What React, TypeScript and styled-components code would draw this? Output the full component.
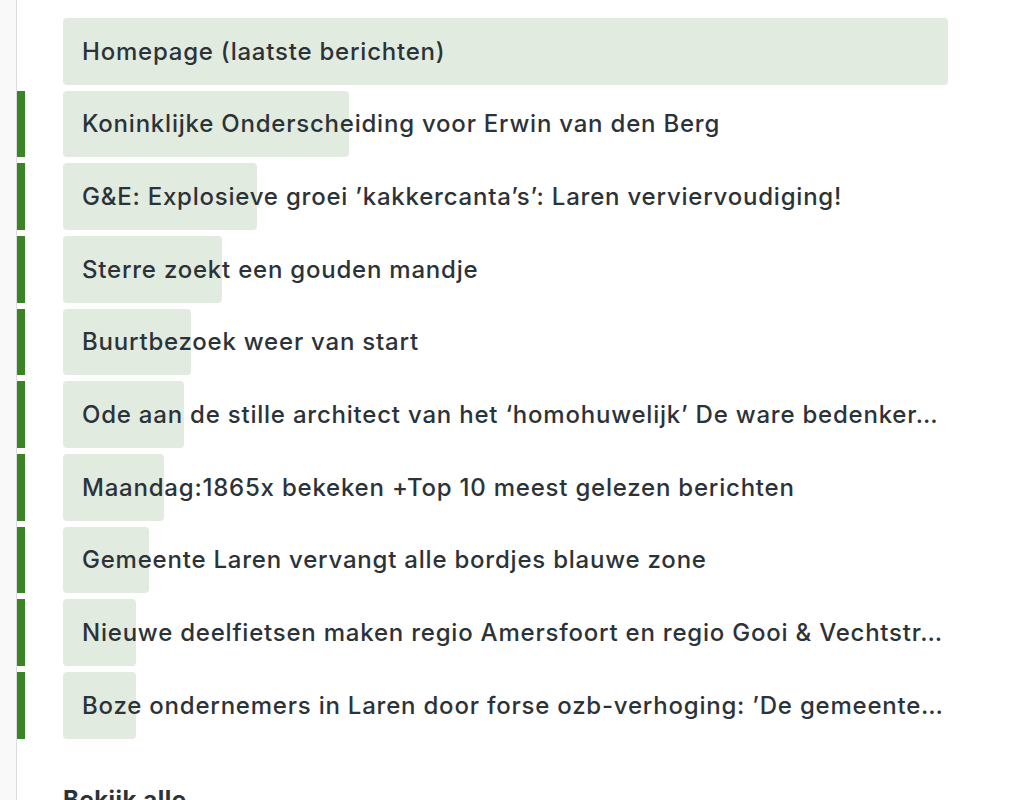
import React from "react";
import styled, { createGlobalStyle } from "styled-components";

const GlobalStyle = createGlobalStyle`
  html, body {
    margin: 0;
    padding: 0;
    background: #ffffff;
  }
  body {
    font-family: Inter, "Noto Sans", "Liberation Sans", sans-serif;
    color: #2c3338;
  }
`;

type Post = {
  title: string;
  views: number;
  page?: boolean;
};

// titles are cut where the list cuts them
const posts: Post[] = [
  { title: "Homepage (laatste berichten)", views: 885, page: true },
  { title: "Koninklijke Onderscheiding voor Erwin van den Berg", views: 286 },
  { title: "G&E: Explosieve groei ’kakkercanta’s’: Laren verviervoudiging!", views: 194 },
  { title: "Sterre zoekt een gouden mandje", views: 159 },
  { title: "Buurtbezoek weer van start", views: 128 },
  { title: "Ode aan de stille architect van het ‘homohuwelijk’ De ware bedenker…", views: 121 },
  { title: "Maandag:1865x bekeken +Top 10 meest gelezen berichten", views: 101 },
  { title: "Gemeente Laren vervangt alle bordjes blauwe zone", views: 86 },
  { title: "Nieuwe deelfietsen maken regio Amersfoort en regio Gooi & Vechtstr…", views: 73 },
  { title: "Boze ondernemers in Laren door forse ozb-verhoging: ’De gemeente…", views: 73 },
];

const Page = styled.div`
  display: flex;
  min-height: 800px;
`;

const Gutter = styled.div`
  width: 16px;
  flex: none;
  background: #f9f9f9;
  border-right: 1px solid #dcdcde;
`;

const Main = styled.main`
  flex: 1;
  padding-top: 18px;
`;

const List = styled.ul`
  list-style: none;
  margin: 0;
  padding: 0;
  display: flex;
  flex-direction: column;
  gap: 6px;
`;

const Row = styled.li`
  display: flex;
  align-items: stretch;
  height: 66.67px;
`;

const Marker = styled.span<{ $active: boolean }>`
  width: 8px;
  flex: none;
  background: ${(p) => (p.$active ? "#3a8427" : "transparent")};
`;

const Track = styled.a`
  position: relative;
  display: flex;
  align-items: center;
  width: 885px;
  margin-left: 38px;
  text-decoration: none;
  color: inherit;
`;

const Fill = styled.span`
  position: absolute;
  left: 0;
  top: 0;
  bottom: 0;
  background: #e2ebdf;
  border-radius: 4px;
`;

const Title = styled.span`
  position: relative;
  padding-left: 19px;
  font-size: 24px;
  font-weight: 500;
  letter-spacing: 0.78px;
  white-space: nowrap;
  overflow: hidden;
  text-overflow: ellipsis;
`;

const MoreLink = styled.a`
  display: inline-block;
  margin: 46px 0 0 46px;
  font-size: 24px;
  font-weight: 700;
  letter-spacing: 0.5px;
  color: #2c3338;
  text-decoration: none;
`;

export default function App() {
  const max = Math.max(...posts.map((p) => p.views));
  return (
    <Page>
      <GlobalStyle />
      <Gutter />
      <Main>
        <List>
          {posts.map((post) => (
            <Row key={post.title}>
              <Marker $active={!post.page} />
              <Track href="#">
                <Fill style={{ width: `${(post.views / max) * 100}%` }} />
                <Title>{post.title}</Title>
              </Track>
            </Row>
          ))}
        </List>
        <MoreLink href="#">Bekijk alle</MoreLink>
      </Main>
    </Page>
  );
}
